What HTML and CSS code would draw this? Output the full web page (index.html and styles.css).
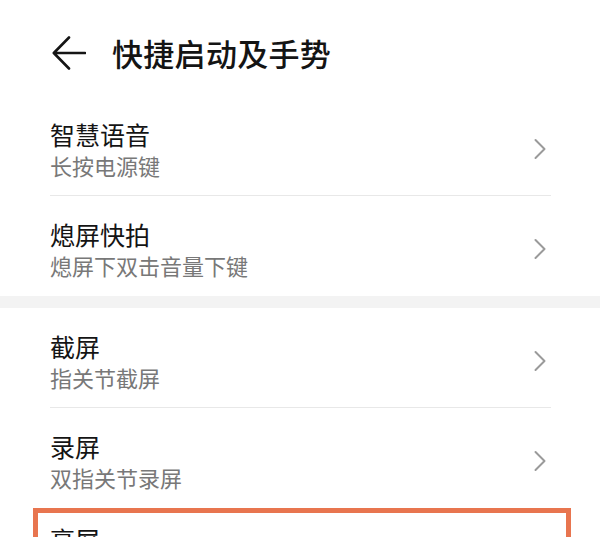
FILE: index.html
```html
<!DOCTYPE html>
<html lang="zh-CN">
<head>
    <meta charset="UTF-8">
    <meta name="viewport" content="width=device-width, initial-scale=1.0">
    <title>快捷启动及手势</title>
    <link rel="stylesheet" href="styles.css">
</head>
<body>
    <div class="header">
        <svg class="back" viewBox="0 0 34 34" width="34" height="34">
            <path d="M2 17 H33 M17 1.5 L1.8 17 L17 32.5" />
        </svg>
        <div class="page-title">快捷启动及手势</div>
    </div>

    <div class="list">
        <div class="row">
            <div class="text">
                <div class="title">智慧语音</div>
                <div class="sub">长按电源键</div>
            </div>
            <svg class="chevron" viewBox="0 0 14 22" width="14" height="22"><path d="M2.5 2 L11.5 11 L2.5 20" /></svg>
        </div>
        <div class="row last">
            <div class="text">
                <div class="title">熄屏快拍</div>
                <div class="sub">熄屏下双击音量下键</div>
            </div>
            <svg class="chevron" viewBox="0 0 14 22" width="14" height="22"><path d="M2.5 2 L11.5 11 L2.5 20" /></svg>
        </div>
    </div>

    <div class="band"></div>

    <div class="list">
        <div class="row">
            <div class="text">
                <div class="title">截屏</div>
                <div class="sub">指关节截屏</div>
            </div>
            <svg class="chevron" viewBox="0 0 14 22" width="14" height="22"><path d="M2.5 2 L11.5 11 L2.5 20" /></svg>
        </div>
        <div class="row last">
            <div class="text">
                <div class="title">录屏</div>
                <div class="sub">双指关节录屏</div>
            </div>
            <svg class="chevron" viewBox="0 0 14 22" width="14" height="22"><path d="M2.5 2 L11.5 11 L2.5 20" /></svg>
        </div>
        <div class="highlight">
            <div class="row last">
                <div class="text">
                    <div class="title">亮屏</div>
                </div>
                <svg class="chevron" viewBox="0 0 14 22" width="14" height="22"><path d="M2.5 2 L11.5 11 L2.5 20" /></svg>
            </div>
        </div>
    </div>
</body>
</html>
```

FILE: styles.css
```css
body {
    margin: 0;
    background: #fff;
    font-family: "Noto Sans CJK SC", "Noto Sans", sans-serif;
    color: #141414;
    overflow: hidden;
}
.header {
    display: flex;
    align-items: center;
    height: 86px;
    padding: 10px 0 0 52px;
    gap: 26px;
}
.back {
    display: block;
    fill: none;
    stroke: #151515;
    stroke-width: 2.6;
    stroke-linecap: round;
    stroke-linejoin: round;
}
.page-title {
    font-size: 31px;
    font-weight: 500;
    line-height: 40px;
    letter-spacing: 0.3px;
}
.list {
    padding: 0 49px 0 50px;
}
.row {
    display: flex;
    align-items: center;
    justify-content: space-between;
    box-sizing: border-box;
    height: 100px;
    padding: 6px 4px 0 0;
    border-bottom: 1px solid #e8e8e8;
}
.row.last {
    border-bottom: none;
}
.title {
    font-size: 25px;
    line-height: 32px;
}
.sub {
    font-size: 22px;
    line-height: 30px;
    color: #787878;
}
.chevron {
    display: block;
    fill: none;
    stroke: #9a9a9a;
    stroke-width: 2;
    stroke-linecap: round;
    stroke-linejoin: round;
}
.band {
    height: 12px;
    background: #f3f3f3;
}
.highlight {
    margin: 0 -20px 0 -17px;
    padding: 0 16px 0 12px;
    border: 5px solid #e8754f;
}
.highlight .row {
    padding-top: 0;
}
.highlight .text {
    align-self: flex-start;
    padding-top: 10px;
}
```
